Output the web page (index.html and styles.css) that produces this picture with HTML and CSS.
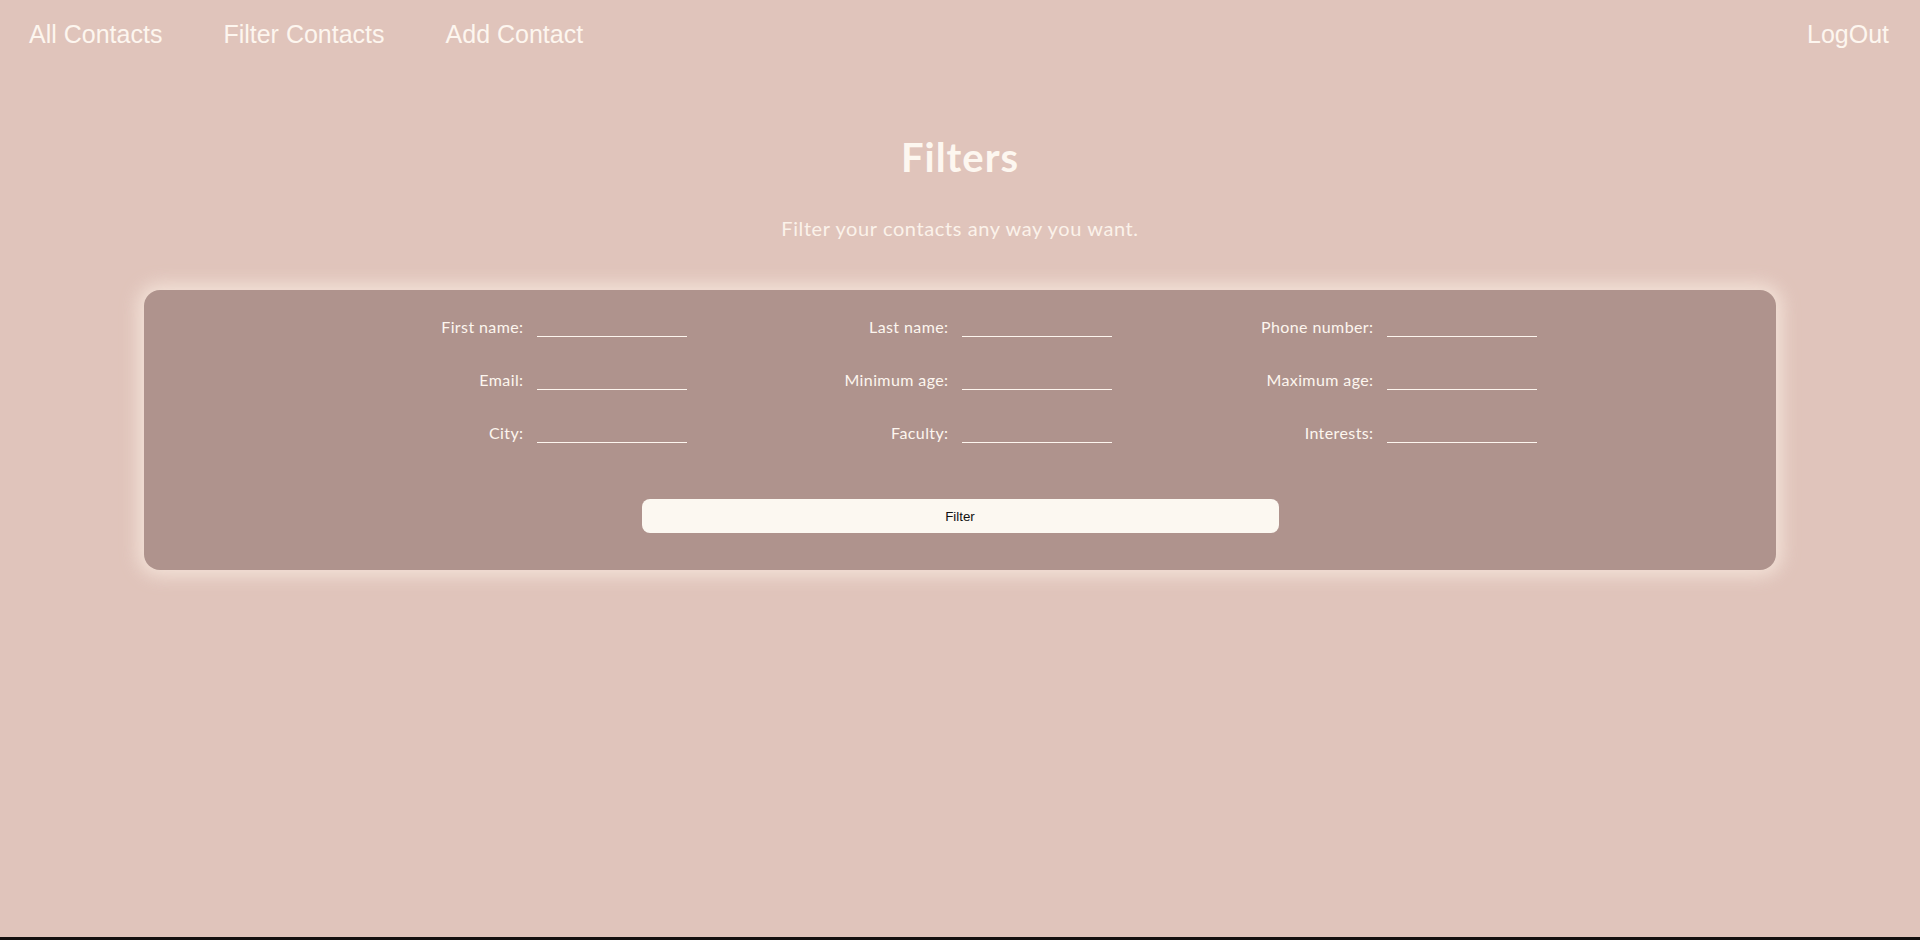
FILE: index.html
```html
<!DOCTYPE html>
<html lang="en">
<head>
<meta charset="utf-8">
<title>Filter Contacts</title>
<link rel="stylesheet" href="styles.css">
</head>
<body>
<div class="page">
  <nav class="nav">
    <div class="nav-left">
      <a class="nav-link" href="#">All Contacts</a>
      <a class="nav-link" href="#">Filter Contacts</a>
      <a class="nav-link" href="#">Add Contact</a>
    </div>
    <a class="nav-link" href="#">LogOut</a>
  </nav>
  <main class="main">
    <h1 class="title">Filters</h1>
    <p class="subtitle">Filter your contacts any way you want.</p>
    <form class="card">
      <div class="fields">
        <div class="field"><label class="field-label">First name:</label><input class="field-input" type="text"></div>
        <div class="field"><label class="field-label">Last name:</label><input class="field-input" type="text"></div>
        <div class="field"><label class="field-label">Phone number:</label><input class="field-input" type="text"></div>
        <div class="field"><label class="field-label">Email:</label><input class="field-input" type="text"></div>
        <div class="field"><label class="field-label">Minimum age:</label><input class="field-input" type="text"></div>
        <div class="field"><label class="field-label">Maximum age:</label><input class="field-input" type="text"></div>
        <div class="field"><label class="field-label">City:</label><input class="field-input" type="text"></div>
        <div class="field"><label class="field-label">Faculty:</label><input class="field-input" type="text"></div>
        <div class="field"><label class="field-label">Interests:</label><input class="field-input" type="text"></div>
      </div>
      <button class="btn" type="button">Filter</button>
    </form>
  </main>
  <div class="bottom-strip"></div>
</div>
</body>
</html>
```

FILE: styles.css
```css
html, body {
  margin: 0;
  padding: 0;
}

body {
  background: #e0c4bb;
  font-family: "Lato", "Noto Sans", sans-serif;
  color: #fdf6ef;
}

.page {
  min-height: 940px;
  display: flex;
  flex-direction: column;
}

.nav {
  height: 68px;
  display: flex;
  align-items: center;
  justify-content: space-between;
  padding: 0 31px 0 29px;
}

.nav-left {
  display: flex;
  gap: 61px;
}

.nav-link {
  font-family: "Liberation Sans", Arial, sans-serif;
  font-size: 25px;
  color: #fdf6ef;
  text-decoration: none;
}

.main {
  flex: 1;
  display: flex;
  flex-direction: column;
  align-items: center;
}

.title {
  margin: 65px 0 0;
  font-size: 40px;
  line-height: 48px;
  font-weight: 700;
  letter-spacing: 1px;
  color: #fdf7f0;
}

.subtitle {
  margin: 35px 0 0;
  font-size: 20px;
  line-height: 24px;
  font-weight: 400;
  letter-spacing: 0.6px;
  color: #fbf2ea;
}

.card {
  box-sizing: border-box;
  width: 85%;
  margin-top: 50px;
  padding: 26px 0 37px;
  background: #af938d;
  border-radius: 16px;
  box-shadow: 0 0 18px 6px rgba(250, 236, 226, 0.75);
}

.fields {
  display: grid;
  grid-template-columns: repeat(3, 303px);
  column-gap: 122px;
  row-gap: 32px;
  justify-content: center;
}

.field {
  display: flex;
  align-items: center;
  gap: 13px;
}

.field-label {
  width: 140px;
  flex: none;
  text-align: right;
  font-size: 16px;
  letter-spacing: 0.4px;
  color: #fdf6ef;
}

.field-input {
  box-sizing: border-box;
  width: 150px;
  height: 21px;
  padding: 0;
  background: transparent;
  border: none;
  border-bottom: 1px solid #fdf6ef;
  outline: none;
  color: #fdf6ef;
}

.btn {
  display: block;
  width: 637px;
  height: 34px;
  margin: 56px auto 0;
  background: #fcf8f1;
  border: none;
  border-radius: 8px;
  font-family: "Liberation Sans", Arial, sans-serif;
  font-size: 13.33px;
  color: #111;
}

.bottom-strip {
  height: 3px;
  background: #14100f;
}
```
